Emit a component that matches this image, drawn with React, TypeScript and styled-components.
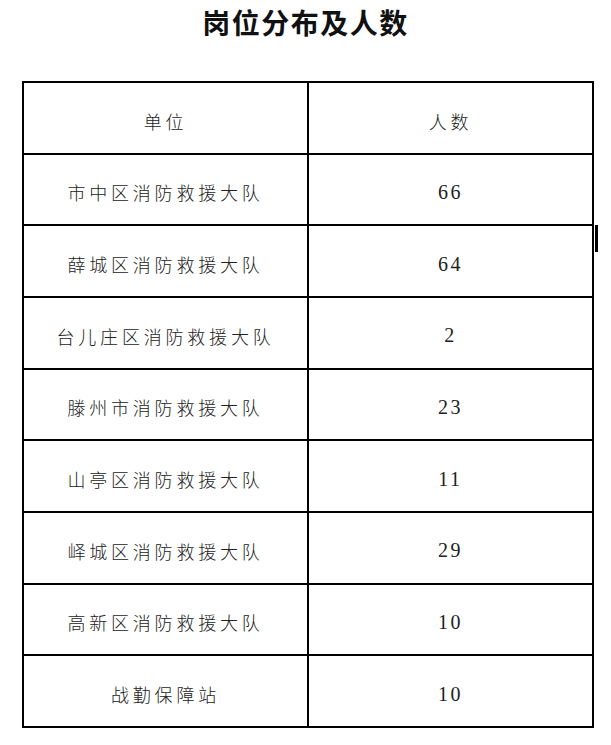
import React from 'react';
import styled, { createGlobalStyle } from 'styled-components';

const GlobalStyle = createGlobalStyle`
    html, body {
        margin: 0;
        padding: 0;
        background: #ffffff;
    }
    body {
        font-family: "Noto Sans CJK SC", "Noto Sans", sans-serif;
    }
`;

const Page = styled.div`
    position: relative;
    width: 611px;
    height: 745px;
    padding-top: 8px;
    box-sizing: border-box;
`;

const Title = styled.h1`
    margin: 0 0 45px 0;
    text-align: center;
    font-size: 28px;
    line-height: 28px;
    font-weight: 700;
    color: #111;
    letter-spacing: 1.5px;
    font-family: "Noto Sans CJK SC", serif;
`;

const Grid = styled.div`
    margin-left: 22px;
    width: 572px;
    display: grid;
    grid-template-columns: 1fr 1fr;
    grid-auto-rows: 71.67px;
    border-top: 2px solid #000;
    border-left: 2px solid #000;
    box-sizing: border-box;
`;

const Cell = styled.div<{ $num?: boolean }>`
    box-sizing: border-box;
    border-right: 2px solid #000;
    border-bottom: 2px solid #000;
    display: flex;
    align-items: center;
    justify-content: center;
    padding-top: 6px;
    color: #222;
    font-family: ${(p) => (p.$num ? '"Liberation Serif", serif' : '"Noto Sans CJK SC", sans-serif')};
    font-size: ${(p) => (p.$num ? '20px' : '18px')};
    letter-spacing: ${(p) => (p.$num ? '2.5px' : '3.8px')};
    font-weight: ${(p) => (p.$num ? 400 : 300)};
`;

const CaretMark = styled.div`
    position: absolute;
    left: 595px;
    top: 225px;
    width: 3px;
    height: 27px;
    background: #000;
`;

const rows: [string, string][] = [
    ['市中区消防救援大队', '66'],
    ['薛城区消防救援大队', '64'],
    ['台儿庄区消防救援大队', '2'],
    ['滕州市消防救援大队', '23'],
    ['山亭区消防救援大队', '11'],
    ['峄城区消防救援大队', '29'],
    ['高新区消防救援大队', '10'],
    ['战勤保障站', '10'],
];

export default function App() {
    return (
        <Page>
            <GlobalStyle />
            <Title>岗位分布及人数</Title>
            <Grid>
                <Cell>单位</Cell>
                <Cell>人数</Cell>
                {rows.map(([unit, count]) => (
                    <React.Fragment key={unit}>
                        <Cell>{unit}</Cell>
                        <Cell $num>{count}</Cell>
                    </React.Fragment>
                ))}
            </Grid>
            <CaretMark />
        </Page>
    );
}
